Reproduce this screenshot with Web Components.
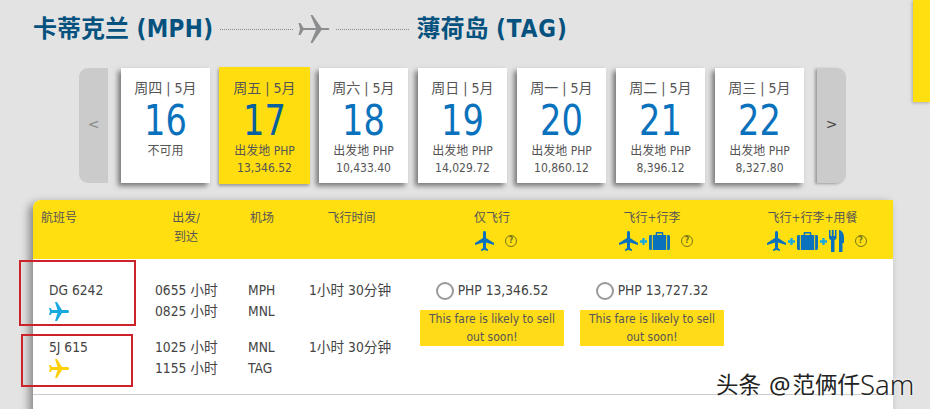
<!DOCTYPE html>
<html><head><meta charset="utf-8">
<style>
html,body{margin:0;padding:0;height:409px;overflow:hidden;background:#e3e3e3}
</style></head><body>
<fare-page></fare-page>
<script>
const FONT='"DejaVu Sans","Noto Sans CJK SC",sans-serif';
const plane=(c,rot=90,ml=0)=>`<svg width="24" height="24" viewBox="0 0 24 24" style="display:block;margin-left:${ml}px"><path fill="${c}" transform="rotate(${rot} 12 12)" d="M21 16v-2l-8-5V3.5c0-.83-.67-1.5-1.5-1.500S10 2.670 10 3.500V9l-8 5v2l8-2.500V19l-2 1.500V22l3.500-1 3.500 1v-1.500L13 19v-5.500l8 2.500z"/></svg>`;
const bag=`<svg width="21" height="18" viewBox="0 0 22 18" preserveAspectRatio="none" style="display:block"><path fill="#0a72bd" d="M7 3V1.200C7 .5 7.500 0 8.200 0h5.600C14.500 0 15 .5 15 1.200V3h-1.500V1.500h-5V3zM0 4.500C0 3.700.7 3 1.500 3H3v15H1.500C.7 18 0 17.300 0 16.500zM4 3h14v15H4zM19 3h1.500c.8 0 1.500.7 1.500 1.500v12c0 .8-.7 1.500-1.500 1.500H19z"/></svg>`;
const fork=`<svg width="15" height="22" viewBox="0 0 15 22" style="display:block"><path fill="#0a72bd" d="M0 0h1.500v6h1.300V0h1.900v6H6V0h1.500v7.500c0 1.300-.9 2.200-2 2.500v12H2V10C.9 9.700 0 8.800 0 7.500zM10 0c3 .5 5 3.500 5 7.500V13h-1.500v9H10z"/></svg>`;
const plus=`<svg width="7" height="7" viewBox="0 0 8 8" style="display:block;margin:0 2px 0 2px"><path fill="#18a9e0" d="M2.700 0h2.600v2.700H8v2.600H5.300V8H2.700V5.300H0V2.700h2.700z"/></svg>`;

class FlightRoute extends HTMLElement{constructor(){super();this.attachShadow({mode:'open'}).innerHTML=`<style>
:host{display:flex;align-items:center;gap:7px;height:68px;padding:0 0 10px 33px;box-sizing:border-box;color:#05527f;font:bold condensed 24px/1 ${FONT}}
.d{width:73px;border-top:1px dotted #888}
.l{letter-spacing:.35px}
.t{letter-spacing:1px}
svg{margin:0 -1px 0 -2px;display:block}
</style><span>卡蒂克兰 <span class="l">(MPH)</span></span><span class="d"></span><svg width="32" height="30" viewBox="0 0 32 30"><path fill="#8b8d8f" d="M.5 9H2.500L5.500 14H18L12.500 1H14.500L23.500 14H29c2 0 2.500.5 2.500 1s-.5 1-2.500 1H23.500L14.500 29H12.500L18 16H5.500L2.500 21H.5L2 15z"/></svg><span class="d"></span><span>薄荷岛 <span class="t">(TAG)</span></span>`}}
customElements.define('flight-route',FlightRoute);

class NavArrow extends HTMLElement{constructor(){super();const r=this.getAttribute('dir')==='r';this.attachShadow({mode:'open'}).innerHTML=`<style>
:host{display:flex;align-items:center;justify-content:center;box-sizing:border-box;padding-bottom:4px;width:29px;height:115px;background:#cbcbcb;flex:none;color:${r?'#444':'#888'};font:14px/1 ${FONT};border-radius:${r?'0 9px 9px 0':'9px 0 0 9px'};box-shadow:${r?'-2px 1px 3px #999':'none'}}
</style><slot></slot>`}}
customElements.define('nav-arrow',NavArrow);

class DateCard extends HTMLElement{constructor(){super();const a=k=>this.getAttribute(k)||'';const sel=this.hasAttribute('selected');this.attachShadow({mode:'open'}).innerHTML=`<style>
:host{display:block;box-sizing:border-box;flex:none;width:89px;height:115px;background:#fff;text-align:center;box-shadow:-3px 3px 5px #777;color:#555;font:condensed 12px/17px ${FONT};padding-top:12px}
:host([selected]){background:#ffdd0f;width:91px;height:117px;margin:-1px;padding-top:13px;box-shadow:-1px 2px 3px #999}
.w{font-size:14px;line-height:16px}
.n{font-size:43px;line-height:43px;color:${sel?'#05609f':'#0a72bd'};margin:3px 0 1px;transform:scaleX(.87)}
</style><div class="w">${a('w')} | 5月</div><div class="n">${a('n')}</div><div>${a('l')}</div><div>${a('p')}</div>`}}
customElements.define('date-card',DateCard);

class DateStrip extends HTMLElement{constructor(){super();this.attachShadow({mode:'open'}).innerHTML=`<style>
:host{display:flex;align-items:center;gap:10px;margin-left:79px;height:115px}
::slotted(nav-arrow:first-child){margin-right:3px}
::slotted(nav-arrow:last-child){margin-left:3px}
</style><slot></slot>`}}
customElements.define('date-strip',DateStrip);

class FareTable extends HTMLElement{constructor(){super();this.attachShadow({mode:'open'}).innerHTML=`<style>
:host{display:block;box-sizing:border-box;width:860px;margin:17px 0 0 33px;background:#fff;border-radius:8px 0 0 0;box-shadow:-4px 3px 8px #888;height:260px;font:condensed 12px/19px ${FONT};color:#444}
.grid{display:grid;grid-template-columns:115px 100px 61px 103px 160px 160px 161px}
.head{background:#ffdf10;height:59px;border-radius:8px 0 0 0;color:#555;padding-top:9px;box-sizing:border-box}
.head>div{text-align:center}
.head>div:nth-child(1){text-align:left;padding-left:8px}
.head>div:nth-child(2){padding-right:24px}.head>div:nth-child(3){padding-right:33px}.head>div:nth-child(4){padding-right:18px}
.ic{display:flex;align-items:center;justify-content:center;margin-top:2px;height:22px;padding-left:6px}
.ic svg:first-child{margin:0 -3px 0 -2px}
.ic svg{flex:none}
.q{width:10px;height:10px;border:1px solid #77761a;border-radius:50%;color:#77761a;font:bold 8px/10px ${FONT};text-align:center;margin-left:11px}
.body{border-bottom:1px solid #ccc;height:136px;box-sizing:border-box;padding-top:21px;grid-template-rows:42px 42px;row-gap:15px;font-size:13.7px;line-height:21px}
.fl{padding-left:16px}
.fl svg{margin-top:-1px}
.t{padding-left:7px}
.fare{grid-column:5;grid-row:1/span 2}
.fare2{grid-column:6;grid-row:1/span 2}
.pr{display:flex;align-items:center;justify-content:center;gap:4px}
.r{width:14px;height:14px;border:2px solid #999;border-radius:50%;background:#fff}
.soon{width:144px;margin:9px auto 0;background:#ffdc17;border-radius:1px;font-size:12px;line-height:18px;text-align:center;color:#555}
</style>
<div class="grid head">
<div>航班号</div><div>出发/<br>到达</div><div>机场</div><div>飞行时间</div>
<div>仅飞行<div class="ic">${plane('#0a72bd',0)}<span class="q">?</span></div></div>
<div>飞行+行李<div class="ic">${plane('#0a72bd',0)}${plus}${bag}<span class="q">?</span></div></div>
<div>飞行+行李+用餐<div class="ic">${plane('#0a72bd',0)}${plus}${bag}${plus}${fork}<span class="q">?</span></div></div>
</div>
<div class="grid body">
<div class="fl">DG 6242${plane('#18a9e0',90,-2)}</div><div class="t">0655 小时<br>0825 小时</div><div>MPH<br>MNL</div><div>1小时 30分钟</div>
<div class="fare"><div class="pr"><span class="r"></span>PHP 13,346.52</div><div class="soon">This fare is likely to sell out soon!</div></div>
<div class="fare2"><div class="pr"><span class="r"></span>PHP 13,727.32</div><div class="soon">This fare is likely to sell out soon!</div></div>
<div class="fl" style="grid-row:2;grid-column:1">5J 615${plane('#ffcf0a',90,-2)}</div><div class="t" style="grid-row:2;grid-column:2">1025 小时<br>1155 小时</div><div style="grid-row:2;grid-column:3">MNL<br>TAG</div><div style="grid-row:2;grid-column:4">1小时 30分钟</div>
</div>`}}
customElements.define('fare-table',FareTable);

class WaterMark extends HTMLElement{constructor(){super();this.attachShadow({mode:'open'}).innerHTML=`<style>
:host{display:flex;align-items:center;gap:2px;position:absolute;left:716px;top:371px;height:28px;font:22.500px/28px "Noto Sans","Noto Sans CJK SC",sans-serif;color:#222;white-space:nowrap;text-shadow:0 0 2px #fff,0 0 2px #fff}
.a{font-size:24px;margin-left:6px}
.s{font-size:27.500px;font-weight:300;margin-left:-2px}
</style><span>头条</span><span class="a">@</span><span>范俩仟</span><span class="s">Sam</span>`}}
customElements.define('water-mark',WaterMark);

class FarePage extends HTMLElement{constructor(){super();this.attachShadow({mode:'open'}).innerHTML=`<style>
:host{display:block;position:relative;width:930px;height:409px;overflow:hidden}
.tab{position:absolute;right:0;top:0;width:17px;height:102px;background:#ffdf10;box-shadow:-1px 1px 3px #aaa}
.box{position:absolute;border:2px solid #cc2229;box-sizing:border-box}
</style>
<flight-route></flight-route>
<date-strip>
<nav-arrow>&lt;</nav-arrow>
<date-card w="周四" n="16" l="不可用"></date-card>
<date-card selected w="周五" n="17" l="出发地 PHP" p="13,346.52"></date-card>
<date-card w="周六" n="18" l="出发地 PHP" p="10,433.40"></date-card>
<date-card w="周日" n="19" l="出发地 PHP" p="14,029.72"></date-card>
<date-card w="周一" n="20" l="出发地 PHP" p="10,860.12"></date-card>
<date-card w="周二" n="21" l="出发地 PHP" p="8,396.12"></date-card>
<date-card w="周三" n="22" l="出发地 PHP" p="8,327.80"></date-card>
<nav-arrow dir="r">&gt;</nav-arrow>
</date-strip>
<fare-table></fare-table>
<div class="tab"></div>
<div class="box" style="left:19px;top:260px;width:117px;height:66px"></div>
<div class="box" style="left:21px;top:334px;width:112px;height:53px"></div>
<water-mark></water-mark>`}}
customElements.define('fare-page',FarePage);
</script></body></html>
